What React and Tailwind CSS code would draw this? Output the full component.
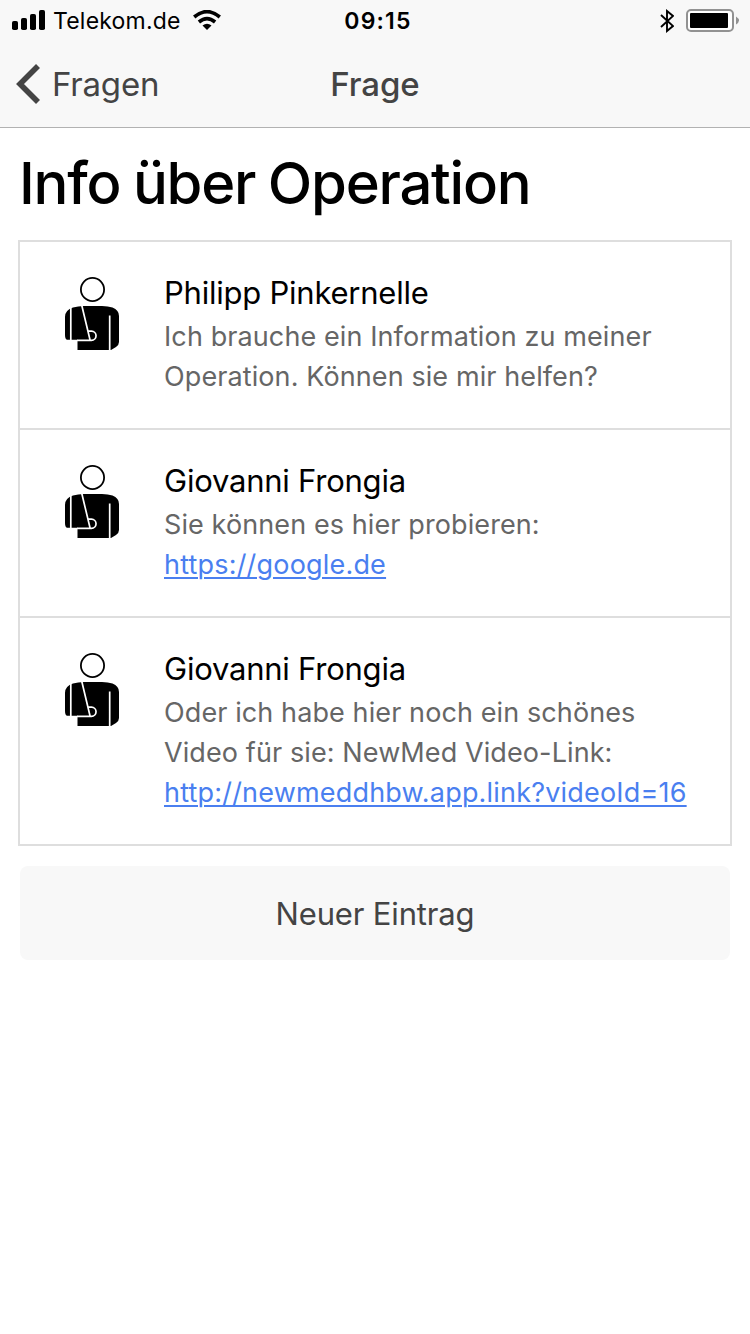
function Avatar() {
  return (
    <svg className="mt-[3px] h-[76px] w-14 shrink-0" viewBox="0 0 56 76" fill="none">
      <circle cx="28.5" cy="13.5" r="11.600" fill="#fff" stroke="#000" strokeWidth="1.800" />
      <path d="M9 31.500Q14 30 20 30H38Q44 30 48.500 31.500Q55 34 55 40V66Q55 69 52 71L47 74H13.500V63.800H3Q1 63 1 59V41Q1 34 9 31.500Z" fill="#000" />
      <path d="M6.800 31V64.500M26 63.800L17.800 29.500M24 55.200H27.500A4.400 4.400 0 0 1 27.500 64.300H13M45.700 39.500V76" stroke="#fff" strokeWidth="1.700" />
    </svg>
  );
}

const entries = [
  { name: "Philipp Pinkernelle", lines: ["Ich brauche ein Information zu meiner", "Operation. Können sie mir helfen?"] },
  { name: "Giovanni Frongia", lines: ["Sie können es hier probieren:"], link: "https://google.de" },
  { name: "Giovanni Frongia", lines: ["Oder ich habe hier noch ein schönes", "Video für sie: NewMed Video-Link:"], link: "http://newmeddhbw.app.link?videoId=16" },
];

export default function App() {
  return (
    <div className="flex h-[1334px] w-[750px] flex-col bg-white font-['Inter',sans-serif] text-black">
      <header className="h-32 border-b border-[#b2b2b2] bg-[#f8f8f8]">
        <div className="grid h-10 grid-cols-[1fr_auto_1fr] items-center pr-[11px] pl-3 text-[23px]">
          <div className="flex items-center">
            <svg className="h-5 w-[34px]" viewBox="0 0 34 20"><rect y="11" width="6" height="9" rx="1.800" /><rect x="9" y="8" width="6" height="12" rx="1.800" /><rect x="18" y="4" width="6" height="16" rx="1.800" /><rect x="27" width="6" height="20" rx="1.800" /></svg>
            <span className="ml-[7px] pt-0.5 tracking-[0.2px]">Telekom.de</span>
            <svg className="ml-3 h-5 w-7" viewBox="0 0 28 20" fill="none" stroke="#000" strokeWidth="3.600"><path d="M1.200 7Q14 -3.800 26.800 7M5.900 12Q14 5.200 22.100 12" /><path d="M14 20L9.500 15.500Q14 12.200 18.500 15.500Z" fill="#000" stroke="none" /></svg>
          </div>
          <span className="pt-0.5 pl-[5px] font-semibold tracking-[1.2px]">09:15</span>
          <div className="flex items-center justify-end pt-px">
            <svg className="mr-3 h-6 w-[14px]" viewBox="0 0 14 24" fill="none" stroke="#000" strokeWidth="1.900"><path d="M1 6L13 17L7 22V2L13 7L1 18" /></svg>
            <svg className="h-6 w-[53px]" viewBox="0 0 53 24"><rect x="1" y="1" width="46" height="21" rx="4" fill="#fff" stroke="#929292" strokeWidth="2" /><rect x="4" y="4" width="38" height="15" rx="1" /><path d="M50 7.500Q53 9.500 53 11.500T50 15.500Z" fill="#929292" /></svg>
          </div>
        </div>
        <div className="grid h-[88px] grid-cols-[1fr_auto_1fr] items-center px-4 text-[33px] text-[#444]">
          <div className="flex items-center">
            <svg className="h-10 w-6" viewBox="0 0 24 40" fill="none" stroke="#444" strokeWidth="5.600"><path d="M22 2L4 20L22 38" /></svg>
            <span className="ml-3 pt-0.5 tracking-[-0.2px]">Fragen</span>
          </div>
          <span className="pt-0.5 font-medium tracking-[-0.1px]">Frage</span>
        </div>
      </header>
      <main className="px-[18px]">
        <h1 className="pt-5 pl-px text-[58px] leading-[70px] font-medium tracking-[-1.250px] [word-spacing:-1.500px]">Info über Operation</h1>
        <ul className="mt-[22px] divide-y-2 divide-[#dedede] border-2 border-[#dedede]">
          {entries.map((e, i) => (
            <li key={i} className="flex px-11 pt-[31px] pb-[31px]">
              <Avatar />
              <div className="ml-11 text-[27px] leading-10 tracking-[0.1px] whitespace-nowrap text-[#666]">
                <h2 className="mb-1 text-[31px] tracking-[-0.23px] text-black">{e.name}</h2>
                {e.lines.map((l) => <p key={l}>{l}</p>)}
                {e.link && <a className="tracking-[0.190px] text-[#4a7ff0] underline decoration-2 underline-offset-[3px]">{e.link}</a>}
              </div>
            </li>
          ))}
        </ul>
        <button className="mx-0.5 mt-5 h-[94px] w-[710px] rounded-lg bg-[#f8f8f8] pt-0.5 text-[31px] tracking-[-0.15px] text-[#444]">Neuer Eintrag</button>
      </main>
    </div>
  );
}
